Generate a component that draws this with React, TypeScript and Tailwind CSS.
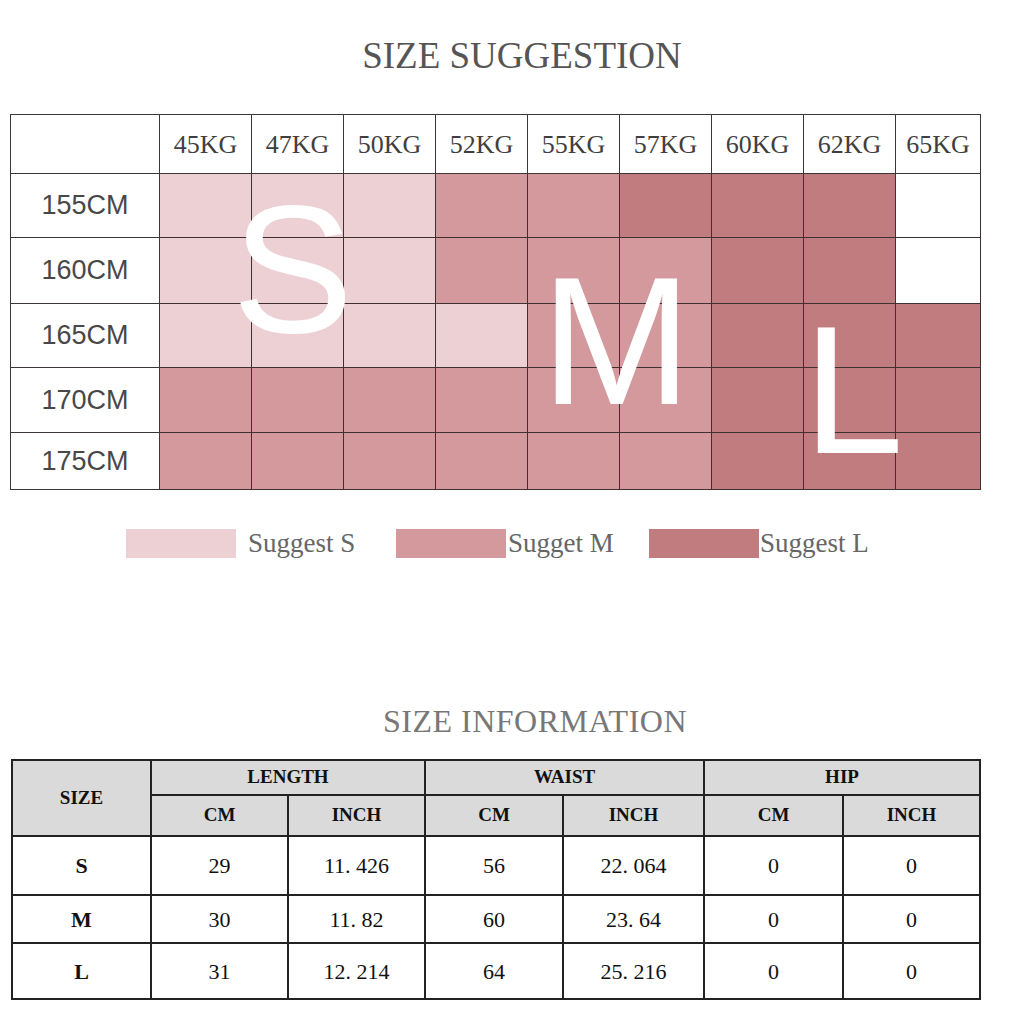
const weights = ["45KG", "47KG", "50KG", "52KG", "55KG", "57KG", "60KG", "62KG", "65KG"];

const grid = [
  { cm: "155CM", h: "h-[64px]", cells: "SSSMMLLL-" },
  { cm: "160CM", h: "h-[66px]", cells: "SSSMMMLL-" },
  { cm: "165CM", h: "h-[64px]", cells: "SSSSMMLLL" },
  { cm: "170CM", h: "h-[65px]", cells: "MMMMMMLLL" },
  { cm: "175CM", h: "h-[57px]", cells: "MMMMMMLLL" },
];

const fill: Record<string, string> = {
  S: "bg-[#ecd0d3]",
  M: "bg-[#d4999c]",
  L: "bg-[#c07c7e]",
  "-": "bg-white",
};

const sizes = [
  { size: "S", rows: ["29", "11. 426", "56", "22. 064", "0", "0"], h: "h-[59px]" },
  { size: "M", rows: ["30", "11. 82", "60", "23. 64", "0", "0"], h: "h-[48px]" },
  { size: "L", rows: ["31", "12. 214", "64", "25. 216", "0", "0"], h: "h-[56px]" },
];

const serif = "font-['Liberation_Serif',serif]";

function Legend({ color, label, width, gap }: { color: string; label: string; width: string; gap: string }) {
  return (
    <div className={`flex items-center ${width}`}>
      <div className={`h-[29px] w-[110px] ${color}`} />
      <span className={`${gap} ${serif} text-[27px] leading-none text-[#666]`}>{label}</span>
    </div>
  );
}

export default function App() {
  return (
    <div className="h-[1024px] w-[1024px] overflow-hidden bg-white">
      <h1 className={`pl-[20px] pt-[37px] text-center ${serif} text-[37px] font-normal leading-none text-[#555]`}>
        SIZE SUGGESTION
      </h1>

      <div className="relative ml-[10px] mt-[40px] w-[970px]">
        <table className="w-[970px] table-fixed border-collapse">
          <colgroup>
            <col className="w-[149px]" />
            {weights.map((w, i) => (
              <col key={w} className={i === 8 ? "w-[85px]" : "w-[92px]"} />
            ))}
          </colgroup>
          <thead>
            <tr className="h-[59px]">
              <th className="border border-[#3d3636] bg-white" />
              {weights.map((w) => (
                <th
                  key={w}
                  className={`border border-[#3d3636] bg-white p-0 text-center ${serif} text-[26px] font-normal text-[#3f3f3f]`}
                >
                  {w}
                </th>
              ))}
            </tr>
          </thead>
          <tbody>
            {grid.map((r) => (
              <tr key={r.cm} className={r.h}>
                <td className="border border-[#3d3636] bg-white p-0 text-center font-['Liberation_Sans',sans-serif] text-[27px] text-[#484848]">
                  {r.cm}
                </td>
                {r.cells.split("").map((c, i) => (
                  <td key={i} className={`border border-[#3f3132] p-0 ${fill[c]}`} />
                ))}
              </tr>
            ))}
          </tbody>
        </table>

        {/* big size letters lie over the grid */}
        <span className="pointer-events-none absolute left-[222px] top-[64px] font-['Liberation_Sans',sans-serif] text-[182px] leading-none text-white">
          S
        </span>
        <span className="pointer-events-none absolute left-[531px] top-[137px] font-['Liberation_Sans',sans-serif] text-[181px] leading-none text-white">
          M
        </span>
        <span className="pointer-events-none absolute left-[793px] top-[186px] font-['Liberation_Sans',sans-serif] text-[181px] leading-none text-white">
          L
        </span>
      </div>

      <div className="mt-[39px] flex pl-[126px]">
        <Legend color="bg-[#ecd0d3]" label="Suggest S" width="w-[270px]" gap="ml-[12px]" />
        <Legend color="bg-[#d4999c]" label="Sugget M" width="w-[253px]" gap="ml-[2px]" />
        <Legend color="bg-[#c07c7e]" label="Suggest L" width="w-[240px]" gap="ml-[1px]" />
      </div>

      <h2
        className={`mt-[147px] pl-[46px] text-center ${serif} text-[32px] font-normal leading-none tracking-[0.5px] text-[#777]`}
      >
        SIZE INFORMATION
      </h2>

      <table className={`ml-[11px] mt-[22px] w-[968px] table-fixed border-collapse ${serif} text-[#111]`}>
        <colgroup>
          <col className="w-[139px]" />
          <col className="w-[137px]" />
          <col className="w-[137px]" />
          <col className="w-[138px]" />
          <col className="w-[141px]" />
          <col className="w-[139px]" />
          <col className="w-[137px]" />
        </colgroup>
        <thead className="bg-[#dadada] text-[19px] font-bold">
          <tr className="h-[35px]">
            <th rowSpan={2} className="border-2 border-[#222] p-0">
              SIZE
            </th>
            <th colSpan={2} className="border-2 border-[#222] p-0">
              LENGTH
            </th>
            <th colSpan={2} className="border-2 border-[#222] p-0">
              WAIST
            </th>
            <th colSpan={2} className="border-2 border-[#222] p-0">
              HIP
            </th>
          </tr>
          <tr className="h-[41px]">
            {["CM", "INCH", "CM", "INCH", "CM", "INCH"].map((u, i) => (
              <th key={i} className="border-2 border-[#222] p-0">
                {u}
              </th>
            ))}
          </tr>
        </thead>
        <tbody className="text-[22px]">
          {sizes.map((s) => (
            <tr key={s.size} className={s.h}>
              <td className="border-2 border-[#222] p-0 text-center font-bold">{s.size}</td>
              {s.rows.map((v, i) => (
                <td key={i} className="border-2 border-[#222] p-0 text-center">
                  {v}
                </td>
              ))}
            </tr>
          ))}
        </tbody>
      </table>
    </div>
  );
}
